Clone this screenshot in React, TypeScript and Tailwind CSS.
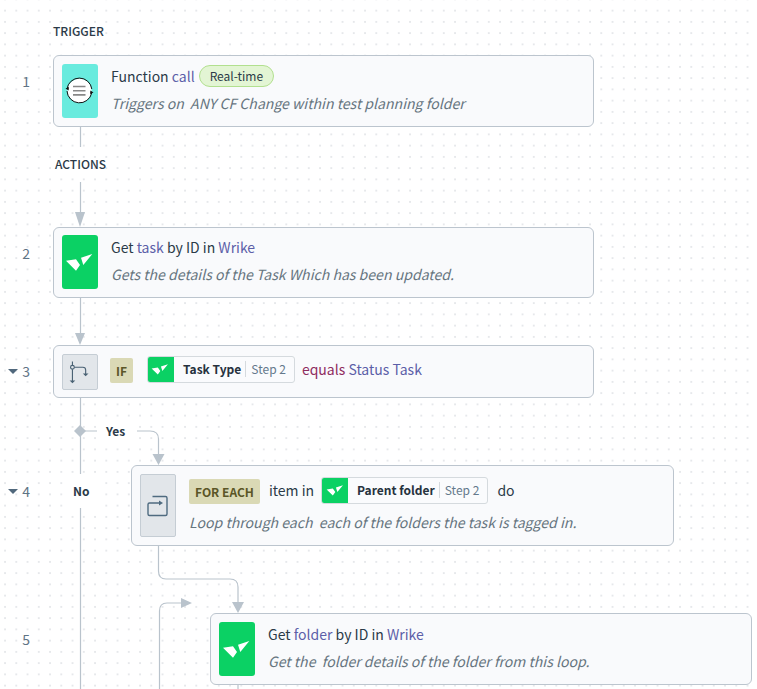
import React from 'react';

const WrikeIcon = () => (
  <div className="flex h-[54px] w-[36px] shrink-0 items-center justify-center rounded-[3px] bg-[#0bd164]">
    <svg viewBox="0 0 36 54" className="h-[54px] w-[36px]">
      <path fill="#fff" d="M4 25.700 14 24.300 18 30 14 35.700ZM19 22.700 30.300 19 21.300 30Z" />
    </svg>
  </div>
);

const FunctionIcon = () => (
  <div className="flex h-[54px] w-[36px] shrink-0 items-center justify-center rounded-[3px] bg-[#69ebde]">
    <svg viewBox="0 0 36 54" className="h-[54px] w-[36px]">
      <circle cx="17.500" cy="26.700" r="12" fill="#fff" />
      <path fill="none" stroke="#111" strokeWidth="1" d="M5 25A12.500 12.500 0 0 1 29.800 25M29.700 29A12.500 12.500 0 0 1 5 27" />
      <path fill="#111" d="M3.500 24.500 7 23 6.600 26.500ZM31.500 28.500 28 30 28.400 26.500Z" />
      <path stroke="#888" strokeWidth="1.600" d="M11 22.500H23.500M11 26.700H23.500M11 30.900H23.500" />
    </svg>
  </div>
);

const Chip = ({ name }: { name: string }) => (
  <span className="flex h-[27px] items-stretch overflow-hidden rounded-[3px] border border-[#d5dade] bg-[#fafbfd]">
    <span className="-my-px -ml-px flex w-[27px] items-center justify-center bg-[#0bd164]">
      <svg viewBox="3 17 29 21" className="w-[18px]">
        <path fill="#fff" d="M4 25.700 14 24.300 18 30 14 35.700ZM19 22.700 30.300 19 21.300 30Z" />
      </svg>
    </span>
    <span className="flex items-center pb-[2px] pl-[9px] pr-[8px] text-[12px]">
      <span className="border-r border-[#d5dade] pr-[4px] font-semibold leading-[16px] text-[#26323e]">{name}</span>
      <span className="pl-[5px] text-[#64798c]">Step 2</span>
    </span>
  </span>
);

const Tag = ({ label }: { label: string }) => (
  <span className="flex h-[25px] items-center rounded-[2px] bg-[#dad9b5] px-[6px] text-[12px] font-semibold text-[#5b5627]">
    {label}
  </span>
);

const Kw = ({ children }: { children: React.ReactNode }) => <span className="text-[#5c5fa8]">{children}</span>;

const Caret = () => (
  <span className="mr-[4px] h-0 w-0 border-x-[5px] border-t-[5px] border-x-transparent border-t-[#50687c]" />
);

const Step = ({ n, caret }: { n: number; caret?: boolean }) => (
  <div className="flex h-[52px] w-[30px] shrink-0 items-center justify-end text-[14px] text-[#5f7485]">
    {caret && <Caret />}
    {n}
  </div>
);

const Desc = ({ children }: { children: React.ReactNode }) => (
  <div className="whitespace-pre text-[14.08px] italic leading-[20px] text-[#66757f]">{children}</div>
);

// connectors between the cards
const Connectors = () => (
  <svg className="absolute inset-0 h-[689px] w-[757px]" viewBox="0 0 757 689" fill="none">
    <g stroke="#b9c3cc" strokeWidth="1.200">
      <path d="M80.500 127V147M80.500 182V215M80.500 298V333M80.500 398V689" />
      <path d="M85 431H97M137 431H150Q158.500 431 158.500 439V455" />
      <path d="M158.500 546V571Q158.500 579 166 579H230Q238 579 238 587V602" />
      <path d="M159.500 689V611Q159.500 603 167 603H182" />
      <path d="M238 685V689" />
    </g>
    <g fill="#b9c3cc">
      <path d="M75 212H85L80 227ZM75 333H85L80 345ZM152.500 454H164.500L158.500 465ZM232 602H244L238 613ZM181 598V608L192 603Z" />
      <path d="M80 425 86 431 80 437 74 431Z" />
    </g>
  </svg>
);

export default function App() {
  return (
    <div className="relative h-[689px] w-[757px] overflow-hidden bg-white bg-[radial-gradient(circle,#e6e8eb_1px,transparent_1.2px)] bg-[length:11.25px_11.25px] bg-[position:-0.6px_5px] pt-[22px] font-['Noto_Sans_CJK_SC',sans-serif] text-[#2b3a48]">
      <Connectors />
      <div className="relative">
        <div className="ml-[53px] h-[18px] text-[12px] font-medium leading-[18px]">TRIGGER</div>

        <div className="mt-[15px] flex">
          <Step n={1} />
          <div className="ml-[23px] flex h-[72px] w-[541px] gap-[13px] rounded-md border border-[#bcc5ce] bg-[#f9fafc] p-[8px]">
            <FunctionIcon />
            <div className="pt-[1px]">
              <div className="flex h-[22px] items-center gap-[4px] text-[14px]">
                <span>Function <Kw>call</Kw></span>
                <span className="flex h-[22px] items-center rounded-full border border-[#b2e08f] bg-[#e3f5d4] px-[10px] text-[12px]">Real-time</span>
              </div>
              <div className="mt-[6px]"><Desc>Triggers on  ANY CF Change within test planning folder</Desc></div>
            </div>
          </div>
        </div>

        <div className="ml-[55px] mt-[28px] h-[18px] text-[12px] font-medium leading-[18px]">ACTIONS</div>

        <div className="mt-[54px] flex">
          <Step n={2} />
          <div className="ml-[23px] flex h-[71px] w-[541px] gap-[13px] rounded-md border border-[#bcc5ce] bg-[#f9fafc] px-[8px] pt-[7px]">
            <WrikeIcon />
            <div className="pt-[1px]">
              <div className="h-[22px] text-[14px] leading-[22px]">Get <Kw>task</Kw> by ID in <Kw>Wrike</Kw></div>
              <div className="mt-[6px]"><Desc>Gets the details of the Task Which has been updated.</Desc></div>
            </div>
          </div>
        </div>

        <div className="mt-[47px] flex">
          <Step n={3} caret />
          <div className="ml-[23px] flex h-[53px] w-[541px] items-center gap-[12px] rounded-md border border-[#bcc5ce] bg-[#f9fafc] px-[8px]">
            <div className="flex h-[36px] w-[36px] shrink-0 items-center justify-center rounded-[2px] border border-[#c5cdd4] bg-[#e2e6ea]">
              <svg viewBox="0 0 36 36" className="h-[36px] w-[36px]" fill="none" stroke="#4a6274" strokeWidth="1.200">
                <circle cx="10" cy="13" r="2" />
                <path d="M10 7V11M10 15V28M12 13H21Q24 13 24 16V20" />
                <path fill="#4a6274" stroke="none" d="M7 27H13L10 30ZM21 19.500H27L24 22.500Z" />
              </svg>
            </div>
            <div className="-mt-[4px] flex h-[27px] items-end">
              <Tag label="IF" />
              <span className="ml-[14px]"><Chip name="Task Type" /></span>
              <span className="-mt-[1px] ml-[7px] self-center text-[14px]"><span className="text-[#8f2d5f]">equals</span> <Kw>Status Task</Kw></span>
            </div>
          </div>
        </div>

        <div className="mt-[67px] flex">
          <Step n={4} caret />
          <div className="ml-[101px] flex h-[81px] w-[543px] gap-[13px] rounded-md border border-[#bcc5ce] bg-[#f9fafc] p-[8px]">
            <div className="flex h-[63px] w-[36px] shrink-0 items-center justify-center rounded-[2px] border border-[#c5cdd4] bg-[#e2e6ea]">
              <svg viewBox="0 0 24 24" className="h-[24px] w-[24px]" fill="none" stroke="#4f6b80" strokeWidth="1.400">
                <path d="M6.500 2.500H19.500Q21 2.500 21 4V20Q21 21.500 19.500 21.500H3.500Q2 21.500 2 20V10.500Q2 9 3.500 9H14" />
                <path fill="#4f6b80" stroke="none" d="M13 6.500 17 9 13 11.500Z" />
              </svg>
            </div>
            <div className="pt-[3px]">
              <div className="flex h-[27px] items-end">
                <Tag label="FOR EACH" />
                <span className="-mt-[1px] ml-[9px] mr-[7px] self-center text-[14px]">item in</span>
                <Chip name="Parent folder" />
                <span className="-mt-[1px] ml-[9px] self-center text-[14px]">do</span>
              </div>
              <div className="mt-[8px]"><Desc>Loop through each  each of the folders the task is tagged in.</Desc></div>
            </div>
          </div>
        </div>

        <div className="mt-[67px] flex">
          <Step n={5} />
          <div className="ml-[180px] flex h-[72px] w-[542px] gap-[13px] rounded-md border border-[#bcc5ce] bg-[#f9fafc] p-[8px]">
            <WrikeIcon />
            <div className="pt-[1px]">
              <div className="h-[22px] text-[14px] leading-[22px]">Get <Kw>folder</Kw> by ID in <Kw>Wrike</Kw></div>
              <div className="mt-[6px]"><Desc>Get the  folder details of the folder from this loop.</Desc></div>
            </div>
          </div>
        </div>
      </div>

      <span className="absolute left-[97px] top-[422px] bg-white px-[9px] text-[12px] font-semibold leading-[18px]">Yes</span>
      <span className="absolute left-[66px] top-[474px] bg-white px-[7px] py-[8px] text-[12px] font-semibold leading-[18px]">No</span>
    </div>
  );
}
